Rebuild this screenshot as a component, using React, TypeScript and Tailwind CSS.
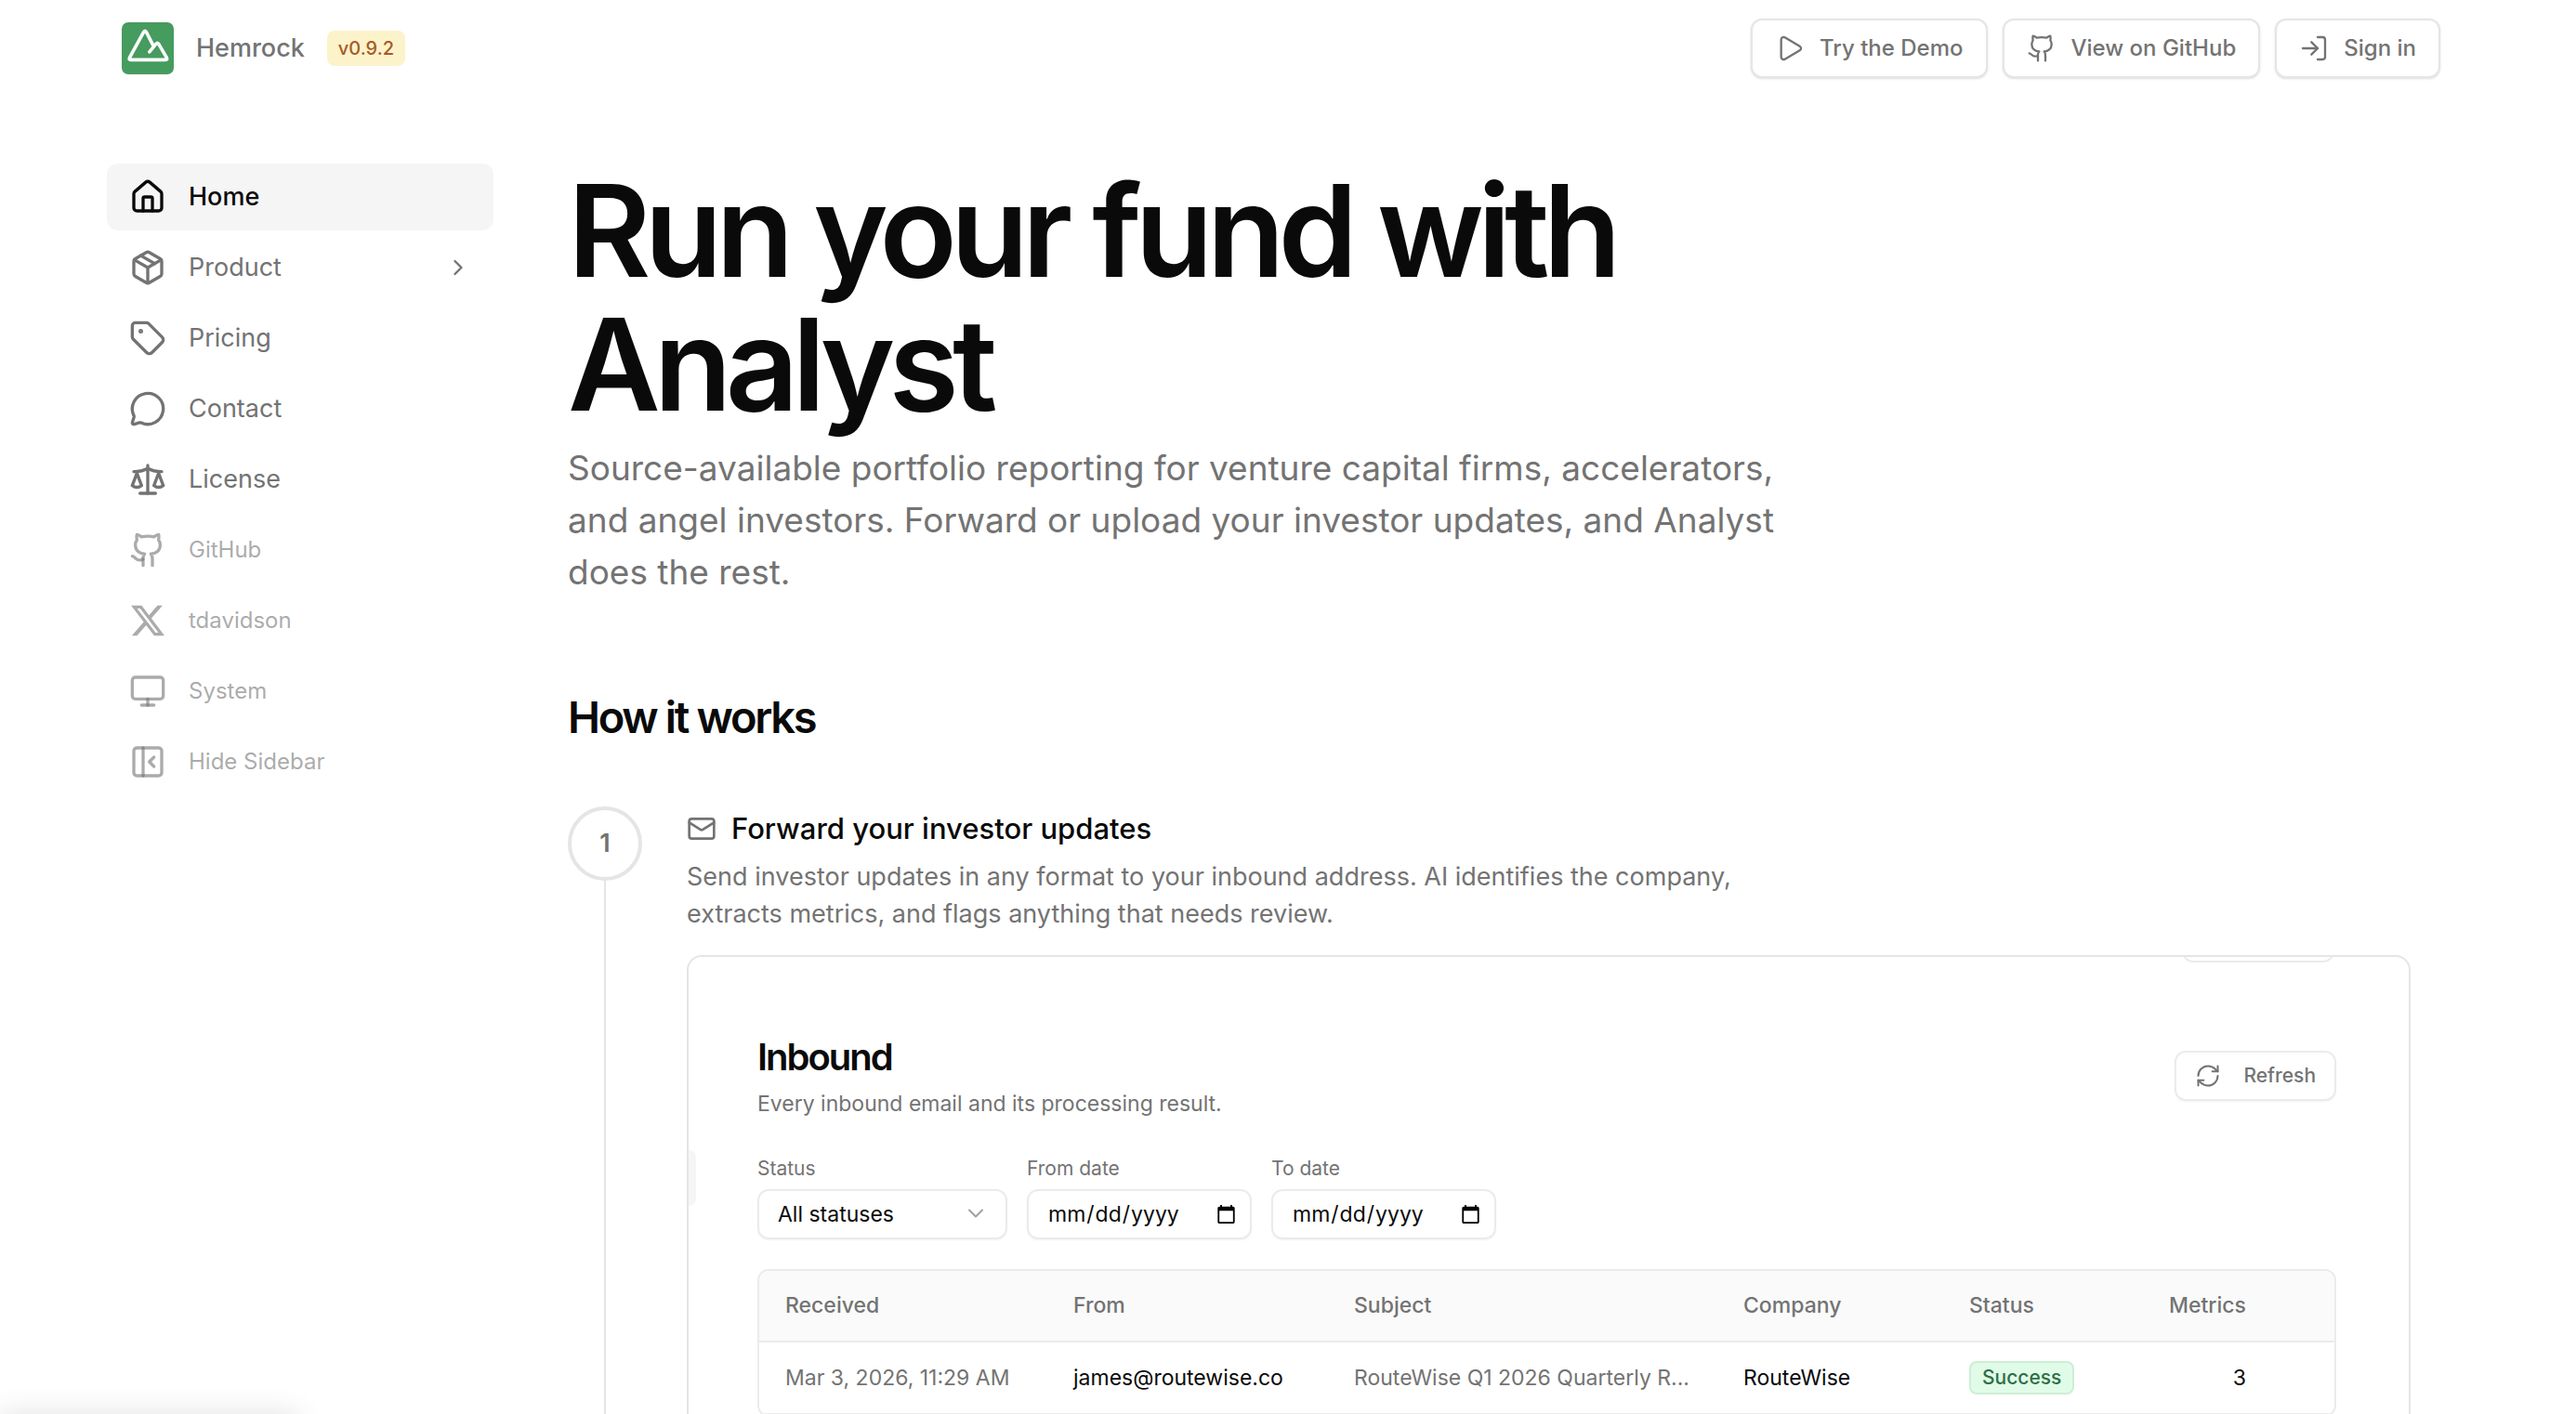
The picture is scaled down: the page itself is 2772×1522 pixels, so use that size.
import type { ReactNode } from "react";
import {
	ChevronDown,
	ChevronRight,
	Github,
	House,
	LogIn,
	Mail,
	MessageCircle,
	Monitor,
	Package,
	PanelLeftClose,
	Play,
	RefreshCw,
	Scale,
	Tag,
} from "lucide-react";

const iconClass = "size-10 shrink-0";

function XLogo() {
	return (
		<svg viewBox="0 0 24 24" fill="currentColor" className={iconClass}>
			<path d="M18.244 2.25h3.308l-7.227 8.26 8.502 11.24H16.17l-5.214-6.817L4.99 21.75H1.68l7.73-8.835L1.254 2.25H8.08l4.713 6.231zm-1.161 17.52h1.833L7.084 4.126H5.117z" />
		</svg>
	);
}

const mainLinks = [
	{ label: "Product", icon: <Package className={iconClass} />, more: true },
	{ label: "Pricing", icon: <Tag className={iconClass} /> },
	{ label: "Contact", icon: <MessageCircle className={iconClass} /> },
	{ label: "License", icon: <Scale className={iconClass} /> },
];

const secondaryLinks = [
	{ label: "GitHub", icon: <Github className={iconClass} /> },
	{ label: "tdavidson", icon: <XLogo /> },
];

function HeaderLink({ icon, children }: { icon: ReactNode; children: ReactNode }) {
	return (
		<a
			href="#"
			className="flex h-16 items-center gap-4 rounded-xl border-2 border-neutral-200 bg-white px-6 text-2xl font-medium text-neutral-500 shadow-sm"
		>
			{icon}
			{children}
		</a>
	);
}

function Header() {
	return (
		<header className="flex items-center justify-between px-4 py-5">
			<div className="flex items-center gap-6">
				<a href="#" className="flex items-center gap-6 text-[27px] font-medium text-neutral-500">
					<svg viewBox="0 0 56 56" className="size-14">
						<rect width="56" height="56" rx="7" fill="#469b5f" />
						<path
							d="M34.2 25.6 26.2 10.2q-1.2-1.8-2.4 0L8.4 38.2q-1 2.2 1.2 2.2h37.6q2.2 0 1.2-2.2L39.6 23.2q-1.2-1.8-2.6 0L29.8 31.8"
							fill="none"
							stroke="#fff"
							strokeWidth="3.6"
							strokeLinecap="round"
							strokeLinejoin="round"
						/>
					</svg>
					Hemrock
				</a>
				<span className="rounded-lg bg-[#fcf3cb] px-3 py-1 text-xl leading-[30px] font-medium text-[#a65a26]">
					v0.9.2
				</span>
			</div>
			<div className="flex items-center gap-4">
				<HeaderLink icon={<Play strokeWidth={1.75} className="size-8" />}>Try the Demo</HeaderLink>
				<HeaderLink icon={<Github strokeWidth={1.75} className="size-8" />}>View on GitHub</HeaderLink>
				<HeaderLink icon={<LogIn strokeWidth={1.75} className="size-8" />}>Sign in</HeaderLink>
			</div>
		</header>
	);
}

function Sidebar() {
	return (
		<nav className="flex w-[416px] shrink-0 flex-col gap-1">
			<a
				href="#"
				className="flex h-[72px] items-center gap-6 rounded-xl bg-neutral-100 px-6 text-[27px] font-medium text-neutral-950"
			>
				<House className={iconClass} />
				Home
			</a>
			{mainLinks.map((link) => (
				<a
					key={link.label}
					href="#"
					className="flex h-[72px] items-center gap-6 rounded-xl px-6 text-[27px] text-neutral-500"
				>
					{link.icon}
					<span className="grow">{link.label}</span>
					{link.more && <ChevronRight className="size-7" />}
				</a>
			))}
			{secondaryLinks.map((link) => (
				<a
					key={link.label}
					href="#"
					className="flex h-[72px] items-center gap-6 rounded-xl px-6 text-2xl text-neutral-500/60"
				>
					{link.icon}
					{link.label}
				</a>
			))}
			<button type="button" className="flex h-[72px] items-center gap-6 rounded-xl px-6 text-2xl text-neutral-500/60">
				<Monitor className={iconClass} />
				System
			</button>
			<button type="button" className="flex h-[72px] items-center gap-6 rounded-xl px-6 text-2xl text-neutral-500/60">
				<PanelLeftClose className={iconClass} />
				Hide Sidebar
			</button>
		</nav>
	);
}

function DateField({ id, label }: { id: string; label: string }) {
	return (
		<div className="flex w-[242px] flex-col gap-1.5">
			<label htmlFor={id} className="text-[21px] leading-8 text-neutral-500">
				{label}
			</label>
			<input
				id={id}
				type="date"
				className="h-[54px] rounded-xl border-2 border-[#ebebeb] pr-3 pl-5 text-[23px] text-neutral-950 shadow-xs"
			/>
		</div>
	);
}

function InboundTable() {
	return (
		<div className="mt-8 overflow-hidden rounded-xl border-2 border-[#ebebeb]">
			<table className="w-full table-fixed text-left text-[23px]">
				<colgroup>
					<col className="w-[310px]" />
					<col className="w-[302px]" />
					<col className="w-[419px]" />
					<col className="w-[243px]" />
					<col className="w-[214px]" />
					<col className="w-[140px]" />
					<col />
				</colgroup>
				<thead className="bg-neutral-50 text-neutral-500">
					<tr className="h-[76px] border-b-2 border-[#ebebeb]">
						<th className="px-7 font-medium">Received</th>
						<th className="px-7 font-medium">From</th>
						<th className="px-7 font-medium">Subject</th>
						<th className="px-7 font-medium">Company</th>
						<th className="px-7 font-medium">Status</th>
						<th className="pr-7 text-right font-medium">Metrics</th>
						<th />
					</tr>
				</thead>
				<tbody>
					<tr className="h-[78px] border-b-2 border-[#ebebeb] text-neutral-950">
						<td className="pl-7 whitespace-nowrap text-neutral-500">Mar 3, 2026, 11:29 AM</td>
						<td className="pl-7">james@routewise.co</td>
						<td className="pl-7 whitespace-nowrap text-neutral-500">RouteWise Q1 2026 Quarterly R...</td>
						<td className="pl-7">RouteWise</td>
						<td className="pl-7">
							<span className="inline-block rounded-lg border-2 border-[#cdeed7] bg-[#e0fce8] px-3 text-[21px] leading-8 font-medium text-[#2f6f46]">
								Success
							</span>
						</td>
						<td className="pr-7 text-right">3</td>
						<td />
					</tr>
				</tbody>
			</table>
		</div>
	);
}

function InboundCard() {
	return (
		<div className="relative mt-6 h-[900px] overflow-hidden rounded-2xl border-2 border-neutral-200 pt-20 pr-[78px] pl-[74px]">
			{/* edges of neighbouring controls, cut off by the frame */}
			<div className="absolute -top-10 right-20 h-[46px] w-[164px] rounded-xl border-2 border-[#ebebeb]" />
			<div className="absolute top-52 left-0 h-[60px] w-2 rounded-r-lg bg-neutral-100" />

			<div className="flex items-center justify-between">
				<div>
					<h4 className="text-[40px] leading-[56px] font-semibold tracking-tighter text-neutral-950">Inbound</h4>
					<p className="mt-1 text-[23px] leading-9 text-neutral-500">
						Every inbound email and its processing result.
					</p>
				</div>
				<button
					type="button"
					className="flex h-[54px] items-center gap-6 rounded-xl border-2 border-[#ebebeb] px-5 text-[21px] font-medium text-neutral-500 shadow-xs"
				>
					<RefreshCw strokeWidth={1.75} className="size-7" />
					Refresh
				</button>
			</div>

			<div className="mt-9 flex gap-[21px]">
				<div className="flex w-[269px] flex-col gap-1.5">
					<label htmlFor="status" className="text-[21px] leading-8 text-neutral-500">
						Status
					</label>
					<div className="relative">
						<select
							id="status"
							className="h-[54px] w-full appearance-none rounded-xl border-2 border-[#ebebeb] px-5 text-[23px] text-neutral-950 shadow-xs"
						>
							<option>All statuses</option>
						</select>
						<ChevronDown
							strokeWidth={1.75}
							className="pointer-events-none absolute top-3 right-5 size-7 text-neutral-400"
						/>
					</div>
				</div>
				<DateField id="from" label="From date" />
				<DateField id="to" label="To date" />
			</div>

			<InboundTable />
		</div>
	);
}

export default function App() {
	return (
		<div className="h-screen overflow-hidden bg-white pr-[130px] pl-[115px] font-['Inter',sans-serif] text-neutral-950">
			<Header />
			<div className="flex gap-20 pt-[72px]">
				<Sidebar />
				<main className="min-w-0 grow pr-12">
					<h1 className="max-w-[1340px] text-[137px] leading-[144px] font-semibold tracking-tighter">
						Run your fund with Analyst
					</h1>
					<p className="mt-3 max-w-[1340px] text-[37px] leading-[56px] text-neutral-500">
						Source-available portfolio reporting for venture capital firms, accelerators, and angel investors.
						Forward or upload your investor updates, and Analyst does the rest.
					</p>

					<h2 className="mt-24 text-[47px] leading-[64px] font-semibold tracking-tighter">How it works</h2>

					<div className="mt-16 flex gap-12">
						<div className="flex shrink-0 flex-col items-center">
							<div className="flex size-20 items-center justify-center rounded-full border-4 border-neutral-200 text-[27px] font-semibold text-neutral-500">
								1
							</div>
							<div className="w-0.5 grow bg-neutral-200" />
						</div>
						<div className="min-w-0 grow">
							<div className="flex items-center gap-4">
								<Mail className="size-8 text-neutral-500" />
								<h3 className="text-[31px] leading-[48px] font-medium">Forward your investor updates</h3>
							</div>
							<p className="mt-2 max-w-[1152px] text-[27px] leading-10 text-neutral-500">
								Send investor updates in any format to your inbound address. AI identifies the company, extracts
								metrics, and flags anything that needs review.
							</p>
							<InboundCard />
						</div>
					</div>
				</main>
			</div>
			{/* soft shadow rising from below the window's lower left corner */}
			<div className="fixed -bottom-10 left-0 h-10 w-80 shadow-[0_0_32px_rgba(0,0,0,0.12)]" />
		</div>
	);
}
